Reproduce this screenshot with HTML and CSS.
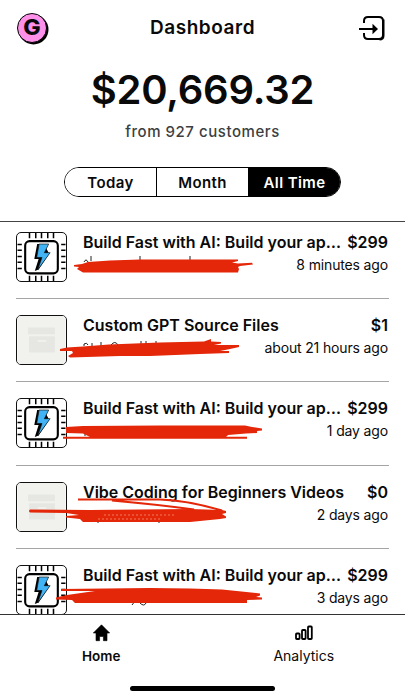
FILE: index.html
```html
<!DOCTYPE html>
<html lang="en">
<head>
  <meta charset="UTF-8">
  <meta name="viewport" content="width=device-width, initial-scale=1.0">
  <title>Dashboard</title>
  <link rel="stylesheet" href="styles.css">
</head>
<body>

  <!-- Shared icons -->
  <svg class="sprite" width="0" height="0">
    <symbol id="chip" viewBox="0 0 50 50">
      <path d="M12.5 0v5.500M19 0v5.500M25 0v5.500M31.500 0v5.500M37.500 0v5.500M12.500 44.500v5.500M19 44.500v5.500M25 44.500v5.500M31.500 44.500v5.500M37.500 44.500v5.500M0 12h4.500M0 18h4.500M0 24.500h4.500M0 30.500h4.500M0 37h4.500M45.500 12h4.500M45.500 18h4.500M45.500 24.500h4.500M45.500 30.500h4.500M45.500 37h4.500" stroke="#000" stroke-width="1.6"/>
      <rect x="8" y="8.500" width="34" height="33.500" rx="4.500" fill="#fff" stroke="#000" stroke-width="2.200"/>
      <path d="M20.500 11.500 L17.500 27 L22 27 L18 39.500 L22 38 L33 21.500 L27.500 11.500Z" fill="#000"/>
      <path d="M22.500 11.500 L20 25.500 L25.500 25.500 L21 38.500 L34 20.500 L28 20.500 L32.500 11.500Z" fill="#42b4f5" stroke="#111" stroke-width=".7"/>
    </symbol>
    <symbol id="box" viewBox="0 0 50 50">
      <rect width="50" height="50" fill="#f1f2ed"/>
      <path d="M11 12h28v7H11z M12 21h27v17H12z" fill="#e6e7e3"/>
      <path d="M21 26h9" stroke="#f3f4f0" stroke-width="1.500"/>
    </symbol>
  </svg>

  <header class="topbar">
    <div class="avatar"><span>G</span></div>
    <h1>Dashboard</h1>
    <svg class="logout" width="28" height="28" viewBox="0 0 28 28" fill="none" stroke="#000" stroke-width="2">
      <path d="M6 9V7q0-4 4-4h11q4 0 4 4v14q0 4-4 4H10q-4 0-4-4v-2"/>
      <path d="M25.500 5.500v16q0 4-4 4"/>
      <path d="M1 15h15"/>
      <path d="M14.500 9.800l5.500 5.200-5.500 5.200z" fill="#000" stroke="none"/>
    </svg>
  </header>

  <section class="summary">
    <div class="amount">$20,669.32</div>
    <div class="customers">from 927 customers</div>
    <div class="tabs">
      <button>Today</button>
      <button>Month</button>
      <button class="active">All Time</button>
    </div>
  </section>

  <main class="sales">
    <article class="sale">
      <svg class="thumb"><use href="#chip"/></svg>
      <div class="info">
        <div class="line"><h2>Build Fast with AI: Build your ap…</h2><b>$299</b></div>
        <time>8 minutes ago</time>
      </div>
      <svg class="marker" viewBox="0 0 405 83">
        <path class="ink" d="M84 46q2-4 4 0M91 40v5M140 40v5M190 40v5"/>
        <path d="M74 49L82 48 88 46 110 44.500 140 43.500 238 43.500 238 45 232 46.500 238 47.500 252 46.800 253 48.500 240 50 238 51 239 53 238 56.500 83 56.500 77 53 79 51 74 50.500z"/>
      </svg>
    </article>

    <article class="sale">
      <svg class="thumb"><use href="#box"/></svg>
      <div class="info">
        <div class="line"><h2>Custom GPT Source Files</h2><b>$1</b></div>
        <time>about 21 hours ago</time>
      </div>
      <svg class="marker" viewBox="0 0 405 83">
        <path class="ink" d="M84 47v-2q3-2 4 1M92 44v3M101 43v4M111 46q4-5 7 0M141 42v3M146 42v3M156 42v3"/>
        <path d="M60 50L67 48.500 83 47.500 109 45.500 160 43.500 204 42.500 211 40 211 42.500 221 43 221 44.500 214 46 239 46 239 48 230 50 220 52 229 52 229 54 200 55 150 57 120 57 70 58.500 68 57 73 54 72 52 60 52z"/>
      </svg>
    </article>

    <article class="sale">
      <svg class="thumb"><use href="#chip"/></svg>
      <div class="info">
        <div class="line"><h2>Build Fast with AI: Build your ap…</h2><b>$299</b></div>
        <time>1 day ago</time>
      </div>
      <svg class="marker" viewBox="0 0 405 83">
        <path class="ink" d="M85 50v4"/>
        <path d="M66 45L83 44 160 43.500 245 43.500 252 45 262 46.500 262 48.500 257 49 257 51 246 51.500 228 53 226 55 90 55 83 51.500 66 51z"/>
        <path d="M63 54.700h184v2H63z"/>
      </svg>
    </article>

    <article class="sale">
      <svg class="thumb"><use href="#box"/></svg>
      <div class="info">
        <div class="line"><h2>Vibe Coding for Beginners Videos</h2><b>$0</b></div>
        <time>2 days ago</time>
      </div>
      <svg class="marker" viewBox="0 0 405 83">
        <path class="stroke" d="M78 33.500h82q28 1 62 11M112 34.500q45 4 82 9"/>
        <path class="ink" d="M98 54v3M159 54v3"/>
        <path d="M30 43.500L90 44 190 43 222 44 226 45 226 47 222 48 226 50.500 226 52 220 53 190 56 83 56 80 53 66 51.500 66 50 79 49 66 47 30 46.500Q28 45 30 43.500z"/>
        <path class="grain" d="M104 49h70M98 53h64"/>
      </svg>
    </article>

    <article class="sale">
      <svg class="thumb"><use href="#chip"/></svg>
      <div class="info">
        <div class="line"><h2>Build Fast with AI: Build your ap…</h2><b>$299</b></div>
        <time>3 days ago</time>
      </div>
      <svg class="marker" viewBox="0 0 405 83">
        <path class="ink" d="M135 52l-3 4M140 54q4 4 6 0"/>
        <path d="M61 40L150 39 190 39.500 222 40.500 260 44.500 260 46.500 256 48 262 48.500 262 50.500 247 51 247 54 75 54 72 51 56 50.500 56 48.500 67 46 88 43 95 42 61 42z"/>
      </svg>
    </article>
  </main>

  <nav class="bottom-nav">
    <a class="current">
      <svg width="18" height="18" viewBox="0 0 18 18"><path d="M9.500 .8L1.300 9h2.700v7.700h3.600v-4.200h3.800v4.200h3.600V9h2.700z" stroke="#000" stroke-width=".6"/></svg>
      Home
    </a>
    <a>
      <svg width="18" height="18" viewBox="0 0 18 18" fill="none" stroke="#000" stroke-width="1.800"><rect x="1" y="9.500" width="3.600" height="5.500" rx=".8"/><rect x="7" y="6" width="3.600" height="9" rx=".8"/><rect x="13" y="2.500" width="3.800" height="12.500" rx=".8"/></svg>
      Analytics
    </a>
  </nav>
  <div class="home-indicator"></div>

</body>
</html>
```
FILE: styles.css
```css
* {
  margin: 0;
  padding: 0;
  box-sizing: border-box;
}

body {
  width: 405px;
  height: 700px;
  overflow: hidden;
  display: flex;
  flex-direction: column;
  background: #fff;
  color: #0a0a0a;
  font-family: Inter, "Liberation Sans", sans-serif;
}

.sprite {
  display: none;
}

.topbar {
  height: 55px;
  padding: 0 19px 0 17px;
  display: flex;
  align-items: center;
  justify-content: space-between;
}

.avatar {
  width: 30px;
  height: 30px;
  border: 1.5px solid #000;
  border-radius: 50%;
  background: #fd90e8;
  box-shadow: 1.5px 1.5px 0 #000;
  font-size: 21px;
  font-weight: 800;
  line-height: 27px;
  text-align: center;
}

.avatar span {
  display: inline-block;
  transform: scaleX(1.1);
}

h1 {
  font-size: 19px;
  font-weight: 600;
  letter-spacing: 0.55px;
}

.summary {
  height: 166px;
  display: flex;
  flex-direction: column;
  align-items: center;
}

.amount {
  height: 67px;
  line-height: 69px;
  font-size: 40px;
  font-weight: 600;
  letter-spacing: -0.2px;
}

.customers {
  height: 20px;
  line-height: 20px;
  font-size: 15px;
  font-weight: 500;
  letter-spacing: 0.55px;
  color: #3c3f42;
}

.tabs {
  display: flex;
  width: 277px;
  height: 30px;
  margin-top: 25px;
  border: 1px solid #000;
  border-radius: 15px;
  overflow: hidden;
}

.tabs button {
  flex: 1;
  border: none;
  border-right: 1px solid #000;
  background: #fff;
  color: #0a0a0a;
  font: 600 15px Inter, sans-serif;
  letter-spacing: 0.4px;
}

.tabs .active {
  border-right: none;
  background: #000;
  color: #fff;
}

.sales {
  height: 393px;
  padding: 0 16px;
  border-top: 1.5px solid #444;
  overflow: hidden;
}

.sale {
  position: relative;
  height: 83.2px;
  padding-top: 16px;
  display: flex;
  gap: 16px;
  border-bottom: 1px solid #a5a5a5;
}

/* the list is scrolled a little under the summary */
.sale:first-child {
  margin-top: -6px;
}

.thumb {
  width: 51px;
  height: 50px;
  border: 1px solid #111;
  border-radius: 5px;
}

.info {
  flex: 1;
  min-width: 0;
  margin-top: -1px;
  padding-right: 1px;
}

.line {
  display: flex;
  justify-content: space-between;
  height: 22px;
  line-height: 22px;
  white-space: nowrap;
}

.line h2,
.line b {
  font-size: 16px;
  font-weight: 600;
}

time {
  display: block;
  line-height: 23px;
  font-size: 14px;
  letter-spacing: -0.15px;
  text-align: right;
}

/* red pen over the buyer's email */
.marker {
  position: absolute;
  top: 0;
  left: -16px;
  width: 405px;
  height: 83px;
  fill: #e42609;
}

.marker .ink {
  fill: none;
  stroke: #222;
  stroke-width: 1;
}

.marker .stroke {
  fill: none;
  stroke: #e42609;
  stroke-width: 2;
}

.marker .grain {
  stroke: #f07a5c;
  stroke-dasharray: 2 2;
}

.bottom-nav {
  height: 72px;
  padding-top: 9px;
  display: flex;
  border-top: 1.5px solid #333;
}

.bottom-nav a {
  flex: 1;
  display: flex;
  flex-direction: column;
  align-items: center;
  gap: 4px;
  font-size: 14px;
  line-height: 20px;
}

.bottom-nav .current {
  font-weight: 600;
  font-size: 13.5px;
}

.home-indicator {
  width: 145px;
  height: 5px;
  margin: 0 auto;
  border-radius: 3px;
  background: #000;
}
```
